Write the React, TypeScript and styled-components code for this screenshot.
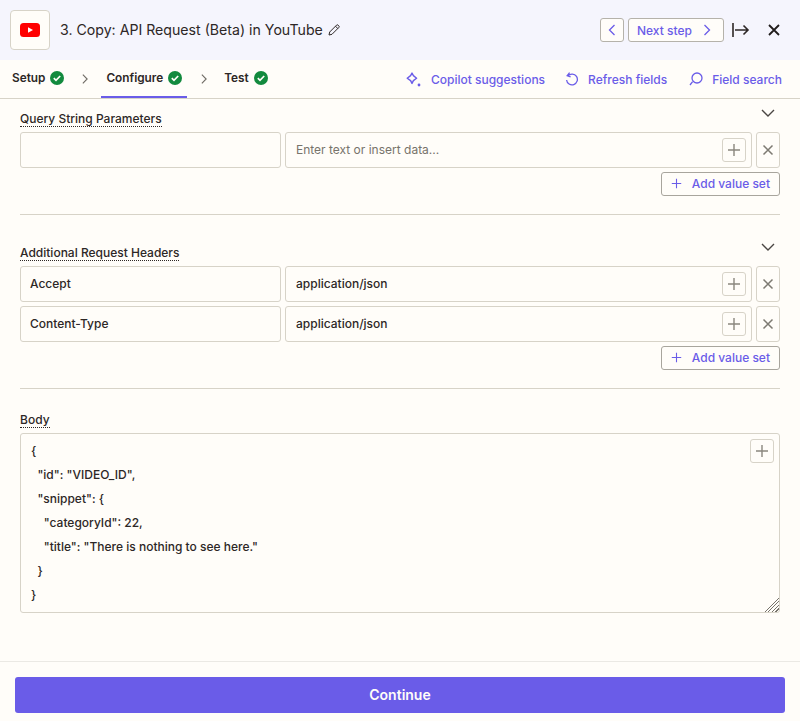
import React, { FC } from 'react'
import styled, { createGlobalStyle } from 'styled-components'

const GlobalStyle = createGlobalStyle`
  html, body { margin: 0; padding: 0; background: #fffdf9; }
  body { font-family: Inter, "Liberation Sans", sans-serif; color: #2d2e2e; }
  * { box-sizing: border-box; }
`

const Page = styled.div`
  width: 800px;
  height: 721px;
  display: flex;
  flex-direction: column;
  overflow: hidden;
  background: #fffdf9;
`

const Header = styled.header`
  height: 60px;
  flex: none;
  display: flex;
  align-items: center;
  padding: 0 16px 0 10px;
  background: #f5f5fd;
`

const LogoBox = styled.div`
  width: 40px;
  height: 40px;
  display: flex;
  align-items: center;
  justify-content: center;
  background: #fffdf9;
  border: 1px solid #d7d3c8;
  border-radius: 4px;
`

const Title = styled.h1`
  margin: 0 5px 0 10px;
  font-size: 14.15px;
  line-height: 20px;
  font-weight: 400;
  color: #2d2726;
`

const Spacer = styled.div`
  flex: 1;
`

const StepButton = styled.button<{ $wide?: boolean }>`
  height: 24px;
  margin-left: 4px;
  padding: ${p => (p.$wide ? '0 9px 0 8px' : '0')};
  width: ${p => (p.$wide ? '96px' : '24px')};
  display: flex;
  align-items: center;
  justify-content: ${p => (p.$wide ? 'space-between' : 'center')};
  background: #fffdf9;
  border: 1px solid #b5b2aa;
  border-radius: 3px;
  font: 500 12px Inter, sans-serif;
  color: #6a5ce8;
`

const PlainIcon = styled.button<{ $gap: number }>`
  width: 20px;
  height: 24px;
  padding: 0;
  margin-left: ${p => p.$gap}px;
  display: flex;
  align-items: center;
  justify-content: center;
  background: none;
  border: 0;
`

const TabBar = styled.nav`
  height: 39px;
  flex: none;
  display: flex;
  align-items: stretch;
  padding: 0 18px 0 0;
  border-bottom: 1px solid #d7d3c8;
`

const Tab = styled.div<{ $active?: boolean }>`
  display: flex;
  align-items: center;
  gap: 5px;
  height: 38px;
  padding: 0 ${p => (p.$active ? '5px' : '0')};
  font-size: 11.8px;
  font-weight: 600;
  color: #2d2726;
  border-bottom: 2px solid ${p => (p.$active ? '#6a5ce8' : 'transparent')};
`

const FirstTab = styled(Tab)`
  margin-left: 12px;
`

const TabArrow = styled.div<{ $left: number; $right: number }>`
  display: flex;
  align-items: center;
  margin: 0 ${p => p.$right}px 0 ${p => p.$left}px;
`

const ToolLink = styled.a<{ $left: number; $gap: number }>`
  display: flex;
  align-items: center;
  gap: ${p => p.$gap}px;
  margin-left: ${p => p.$left}px;
  font-size: 12px;
  font-weight: 500;
  color: #6a5ce8;
`

const Content = styled.main`
  flex: 1;
  padding: 0 20px;
`

const SectionHead = styled.div<{ $top: number; $after?: number }>`
  display: flex;
  justify-content: space-between;
  align-items: flex-start;
  padding-top: ${p => p.$top}px;
  margin-bottom: ${p => p.$after ?? 5}px;
`

const FieldLabel = styled.label`
  display: block;
  font-size: 12px;
  line-height: 15px;
  font-weight: 500;
  color: #2d2726;
  border-bottom: 1px dotted #2d2726;
`

const Chevron = styled.button<{ $lift: number }>`
  width: 24px;
  height: 16px;
  margin-top: -${p => p.$lift}px;
  margin-bottom: -${p => 16 - p.$lift}px;
  padding: 0;
  display: flex;
  align-items: center;
  justify-content: center;
  background: none;
  border: 0;
`

const Rows = styled.div`
  display: flex;
  flex-direction: column;
  gap: 4px;
`

const Row = styled.div`
  display: grid;
  grid-template-columns: 261px 467px 24px;
  gap: 4px;
  height: 36px;
`

const TextBox = styled.input`
  width: 100%;
  height: 36px;
  padding: 0 10px 2px;
  background: #fffdf9;
  border: 1px solid #d7d3c8;
  border-radius: 3px;
  outline: 0;
  font: 500 12px Inter, sans-serif;
  color: #2d2726;
  &::placeholder { color: #77736b; font-weight: 400; opacity: 1; }
`

const NameBox = styled(TextBox)`
  padding-left: 9px;
`

const ValueWrap = styled.div`
  position: relative;
`

const InsertButton = styled.button`
  position: absolute;
  top: 6px;
  right: 6px;
  width: 24px;
  height: 24px;
  padding: 0;
  display: flex;
  align-items: center;
  justify-content: center;
  background: #fffdf9;
  border: 1px solid #d7d3c8;
  border-radius: 3px;
`

const RemoveButton = styled.button`
  height: 36px;
  padding: 0;
  display: flex;
  align-items: center;
  justify-content: center;
  background: #fffdf9;
  border: 1px solid #d7d3c8;
  border-radius: 3px;
`

const AddRow = styled.div`
  display: flex;
  justify-content: flex-end;
  margin-top: 4px;
`

const AddButton = styled.button`
  width: 119px;
  height: 24px;
  padding: 0 9px 2px;
  display: flex;
  align-items: center;
  justify-content: space-between;
  background: #fffdf9;
  border: 1px solid #a8a59d;
  border-radius: 3px;
  font: 500 12px Inter, sans-serif;
  color: #6a5ce8;
`

const Divider = styled.hr`
  margin: 18px 0 0;
  height: 1px;
  background: #d7d3c8;
  border: 0;
`

const BodyWrap = styled.div`
  position: relative;
  height: 180px;
`

const BodyArea = styled.textarea`
  display: block;
  width: 100%;
  height: 180px;
  padding: 5px 10px;
  background: #fffdf9;
  border: 1px solid #d7d3c8;
  border-radius: 3px;
  outline: 0;
  resize: vertical;
  white-space: pre;
  overflow: hidden;
  font: 500 12px/24px Inter, sans-serif;
  color: #2d2726;
  &::-webkit-resizer {
    background:
      linear-gradient(135deg, #fffdf9 50%, transparent 50%),
      repeating-linear-gradient(135deg, #77736b 0 1px, transparent 1px 2.6px);
  }
`

const Footer = styled.footer`
  height: 60px;
  flex: none;
  padding: 15px 15px 0;
  border-top: 1px solid #ebe9e4;
`

const ContinueButton = styled.button`
  width: 100%;
  height: 36px;
  padding: 0 0 2px;
  background: #6a5ce8;
  border: 0;
  border-radius: 3px;
  font: 600 14px Inter, sans-serif;
  color: #fffdf9;
`

const Check: FC = () => (
  <svg width="14" height="14" viewBox="0 0 14 14">
    <circle cx="7" cy="7" r="7" fill="#128a3e" />
    <path d="M3.8 7.2l2.2 2.2 4.2-4.4" fill="none" stroke="#fffdf9" strokeWidth="1.7" />
  </svg>
)

const Caret: FC<{ dir: 'left' | 'right'; color?: string; size?: number }> = ({ dir, color = '#6a5ce8', size = 14 }) => (
  <svg width={size} height={size} viewBox="0 0 14 14" fill="none" stroke={color} strokeWidth="1.3">
    <path d={dir === 'left' ? 'M9.5 2L4.5 7l5 5' : 'M4.5 2l5 5-5 5'} />
  </svg>
)

const Plus: FC<{ color?: string; size?: number }> = ({ color = '#8a867e', size = 14 }) => (
  <svg width={size} height={size} viewBox="0 0 14 14" fill="none" stroke={color} strokeWidth="1.4">
    <path d="M7 1v12M1 7h12" />
  </svg>
)

const Cross: FC = () => (
  <svg width="12" height="12" viewBox="0 0 12 12" fill="none" stroke="#7d7a72" strokeWidth="1.5">
    <path d="M1.5 1.5l9 9M10.5 1.5l-9 9" />
  </svg>
)

const DownChevron: FC = () => (
  <svg width="16" height="10" viewBox="0 0 16 10" fill="none" stroke="#4a4643" strokeWidth="1.4">
    <path d="M2 2l6 6 6-6" />
  </svg>
)

const YouTubeLogo: FC = () => (
  <svg width="20" height="14" viewBox="0 0 20 14">
    <rect width="20" height="14" rx="3.5" fill="#f00" />
    <path d="M8 4.2L13 7l-5 2.8z" fill="#fff" />
  </svg>
)

const Pencil: FC = () => (
  <svg width="12" height="12" viewBox="0 0 12 12" fill="none" stroke="#2d2726" strokeWidth="1">
    <path d="M1 11l.7-3L8.6 1.1a1 1 0 011.4 0l.9.9a1 1 0 010 1.4L4 10.3z M7.5 2.2l2.3 2.3" />
  </svg>
)

const ExitIcon: FC = () => (
  <svg width="18" height="16" viewBox="0 0 18 16" fill="none" stroke="#2d2726" strokeWidth="1.6">
    <path d="M1 1v14M3 8h13M11.5 3.5L16 8l-4.5 4.5" />
  </svg>
)

const CloseIcon: FC = () => (
  <svg width="12" height="12" viewBox="0 0 12 12" fill="none" stroke="#201c1b" strokeWidth="1.8">
    <path d="M1 1l10 10M11 1L1 11" />
  </svg>
)

const SparkIcon: FC = () => (
  <svg width="15" height="15" viewBox="0 0 15 15" fill="none" stroke="#6a5ce8" strokeWidth="1.4">
    <path d="M6 1l1.4 2.6L10.6 6.2 7.4 8.6 6 11.4 4.6 8.6 1.2 6.2 4.6 3.6z" strokeLinejoin="round" />
    <circle cx="13" cy="13" r="1.4" fill="#6a5ce8" stroke="none" />
  </svg>
)

const RefreshIcon: FC = () => (
  <svg width="14" height="14" viewBox="0 0 14 14" fill="none" stroke="#6a5ce8" strokeWidth="1.3">
    <path d="M3 3.8A5.4 5.4 0 1 1 1.6 8M4.6 0.6L2.2 3.6l3.4 1.2" />
  </svg>
)

const SearchIcon: FC = () => (
  <svg width="14" height="14" viewBox="0 0 14 14" fill="none" stroke="#6a5ce8" strokeWidth="1.3">
    <circle cx="8" cy="6" r="5" />
    <path d="M3.6 9.6L1 13" />
  </svg>
)

interface PairProps {
  name?: string
  value?: string
}

const PairRow: FC<PairProps> = ({ name, value }) => (
  <Row>
    <NameBox defaultValue={name} />
    <ValueWrap>
      <TextBox defaultValue={value} placeholder="Enter text or insert data..." />
      <InsertButton><Plus /></InsertButton>
    </ValueWrap>
    <RemoveButton><Cross /></RemoveButton>
  </Row>
)

const AddValueSet: FC = () => (
  <AddRow>
    <AddButton><Plus color="#6a5ce8" size={11} />Add value set</AddButton>
  </AddRow>
)

const bodyText = `{
  "id": "VIDEO_ID",
  "snippet": {
    "categoryId": 22,
    "title": "There is nothing to see here."
  }
}`

export default function App() {
  return (
    <Page>
      <GlobalStyle />
      <Header>
        <LogoBox><YouTubeLogo /></LogoBox>
        <Title>3. Copy: API Request (Beta) in YouTube</Title>
        <Pencil />
        <Spacer />
        <StepButton><Caret dir="left" /></StepButton>
        <StepButton $wide>Next step<Caret dir="right" /></StepButton>
        <PlainIcon $gap={7}><ExitIcon /></PlainIcon>
        <PlainIcon $gap={13}><CloseIcon /></PlainIcon>
      </Header>
      <TabBar>
        <FirstTab>Setup <Check /></FirstTab>
        <TabArrow $left={15} $right={10}><Caret dir="right" color="#6f6b64" size={12} /></TabArrow>
        <Tab $active>Configure <Check /></Tab>
        <TabArrow $left={11} $right={14}><Caret dir="right" color="#6f6b64" size={12} /></TabArrow>
        <Tab>Test <Check /></Tab>
        <Spacer />
        <ToolLink $left={0} $gap={10}><SparkIcon />Copilot suggestions</ToolLink>
        <ToolLink $left={20} $gap={9}><RefreshIcon />Refresh fields</ToolLink>
        <ToolLink $left={22} $gap={9}><SearchIcon />Field search</ToolLink>
      </TabBar>
      <Content>
        <SectionHead $top={12}>
          <FieldLabel>Query String Parameters</FieldLabel>
          <Chevron $lift={6}><DownChevron /></Chevron>
        </SectionHead>
        <Rows><PairRow /></Rows>
        <AddValueSet />
        <Divider />
        <SectionHead $top={30}>
          <FieldLabel>Additional Request Headers</FieldLabel>
          <Chevron $lift={6}><DownChevron /></Chevron>
        </SectionHead>
        <Rows>
          <PairRow name="Accept" value="application/json" />
          <PairRow name="Content-Type" value="application/json" />
        </Rows>
        <AddValueSet />
        <Divider />
        <SectionHead $top={23}>
          <FieldLabel>Body</FieldLabel>
        </SectionHead>
        <BodyWrap>
          <BodyArea defaultValue={bodyText} spellCheck={false} />
          <InsertButton><Plus /></InsertButton>
        </BodyWrap>
      </Content>
      <Footer>
        <ContinueButton>Continue</ContinueButton>
      </Footer>
    </Page>
  )
}
